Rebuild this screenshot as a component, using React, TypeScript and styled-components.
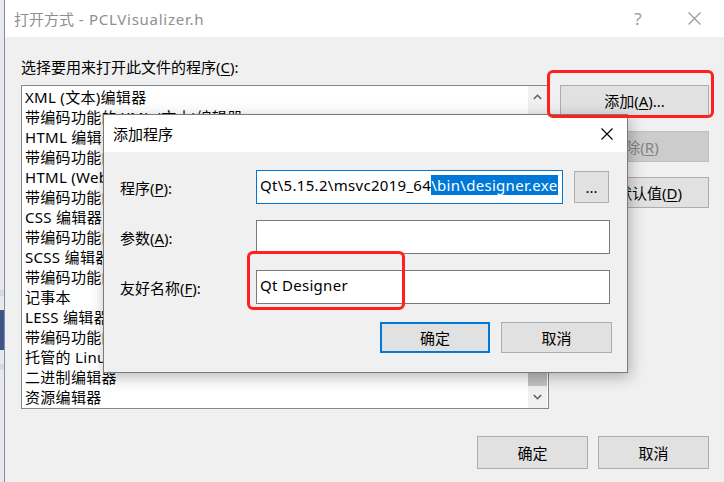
import React from "react";
import styled, { createGlobalStyle } from "styled-components";

const GlobalStyle = createGlobalStyle`
  html, body { margin: 0; padding: 0; }
  body {
    width: 724px;
    height: 482px;
    overflow: hidden;
    background: #f0f0f0;
    font-family: "Segoe UI", "Noto Sans", "Microsoft YaHei", "Noto Sans CJK SC", sans-serif;
    font-size: 15px;
    color: #000;
  }
  * { box-sizing: border-box; }
`;

const Screen = styled.div`
  position: relative;
  width: 724px;
  height: 482px;
  display: flex;
  overflow: hidden;
`;

const DesktopEdge = styled.div`
  width: 4px;
  background: #e9e9e9;
  display: flex;
  flex-direction: column;
  padding-top: 290px;
  gap: 14px;
`;

const DesktopBlock = styled.div<{ $h: number; $c: string }>`
  height: ${(p) => p.$h}px;
  background: ${(p) => p.$c};
`;

const MainWindow = styled.div`
  flex: 1;
  display: flex;
  flex-direction: column;
  border-left: 1px solid #7d8db0;
`;

const TitleBar = styled.div<{ $h: number; $pad: number }>`
  height: ${(p) => p.$h}px;
  background: #fff;
  display: flex;
  align-items: center;
  padding-left: ${(p) => p.$pad}px;
  flex-shrink: 0;
`;

const TitleText = styled.div<{ $muted?: boolean }>`
  flex: 1;
  font-size: 15px;
  color: ${(p) => (p.$muted ? "#8f8f8f" : "#000")};
  white-space: nowrap;
`;

const TitleLatin = styled.span`
  letter-spacing: 0.75px;
`;

const CaptionButton = styled.div<{ $w: number }>`
  width: ${(p) => p.$w}px;
  height: 100%;
  display: flex;
  align-items: center;
  justify-content: center;
  color: #9a9a9a;
  font-size: 17px;
`;

const Client = styled.div`
  flex: 1;
  background: #f0f0f0;
  padding: 20px 15px 0 16px;
  display: flex;
  flex-direction: column;
`;

const Prompt = styled.div`
  height: 20px;
  line-height: 20px;
  margin-bottom: 8px;
  white-space: nowrap;
`;

const Key = styled.span`
  text-decoration: underline;
  text-underline-offset: 2px;
`;

const ContentRow = styled.div`
  display: flex;
  gap: 11px;
  align-items: flex-start;
`;

const ListBox = styled.div`
  width: 528px;
  height: 324px;
  border: 1px solid #828790;
  background: #fff;
  display: flex;
`;

const ListItems = styled.div`
  flex: 1;
  padding: 1px 0 0 3px;
  overflow: hidden;
`;

const ListItem = styled.div`
  height: 20px;
  line-height: 20px;
  white-space: nowrap;
  letter-spacing: 0.3px;
`;

const ScrollBar = styled.div`
  width: 19px;
  margin-right: 1px;
  background: #f0f0f0;
  display: flex;
  flex-direction: column;
`;

const ScrollArrow = styled.div`
  height: 22px;
  display: flex;
  align-items: center;
  justify-content: center;
`;

const ScrollTrack = styled.div`
  flex: 1;
  display: flex;
  flex-direction: column;
  justify-content: flex-end;
`;

const ScrollThumb = styled.div`
  height: 190px;
  background: #c2c2c2;
`;

const ButtonColumn = styled.div`
  width: 149px;
  display: flex;
  flex-direction: column;
  gap: 15px;
`;

const WinButton = styled.div<{ $w?: number; $h?: number; $disabled?: boolean; $default?: boolean }>`
  width: ${(p) => (p.$w ? `${p.$w}px` : "100%")};
  height: ${(p) => p.$h ?? 31}px;
  background: ${(p) => (p.$disabled ? "#cccccc" : "#e1e1e1")};
  border: ${(p) => (p.$default ? "2px solid #0078d7" : p.$disabled ? "1px solid #bfbfbf" : "1px solid #adadad")};
  color: ${(p) => (p.$disabled ? "#838383" : "#000")};
  display: flex;
  align-items: center;
  justify-content: center;
  white-space: nowrap;
  flex-shrink: 0;
`;

const Footer = styled.div`
  display: flex;
  justify-content: flex-end;
  gap: 10px;
  margin-top: 27px;
`;

const Dialog = styled.div`
  position: absolute;
  left: 103px;
  top: 114px;
  width: 525px;
  height: 259px;
  border: 1px solid #7a7a7a;
  background: #f0f0f0;
  box-shadow: 2px 4px 14px rgba(0, 0, 0, 0.28);
  display: flex;
  flex-direction: column;
`;

const DialogBody = styled.div`
  padding: 18px 17px 0 15px;
  display: flex;
  flex-direction: column;
`;

const FormGrid = styled.div`
  display: grid;
  grid-template-columns: 137px 1fr;
  row-gap: 16px;
  align-items: center;
`;

const FieldLabel = styled.div`
  white-space: nowrap;
  padding-left: 1px;
`;

const FieldRow = styled.div`
  display: flex;
  align-items: center;
  gap: 11px;
`;

const TextField = styled.div<{ $w?: number; $focused?: boolean }>`
  width: ${(p) => (p.$w ? `${p.$w}px` : "100%")};
  height: 34px;
  background: #fff;
  border: 1px solid ${(p) => (p.$focused ? "#0078d7" : "#7a7a7a")};
  padding: 0 0 5px 3px;
  display: flex;
  align-items: center;
  white-space: nowrap;
  overflow: hidden;
  letter-spacing: 0.3px;
`;

const Selection = styled.span`
  background: #0078d7;
  color: #fff;
  line-height: 20px;
`;

const DialogButtons = styled.div`
  display: flex;
  justify-content: flex-end;
  gap: 11px;
  margin-top: 18px;
  margin-right: -2px;
`;

const Annotation = styled.div<{ $x: number; $y: number; $w: number; $h: number }>`
  position: absolute;
  left: ${(p) => p.$x}px;
  top: ${(p) => p.$y}px;
  width: ${(p) => p.$w}px;
  height: ${(p) => p.$h}px;
  border: 3px solid #ff1f1f;
  border-radius: 6px;
  pointer-events: none;
`;

const CloseIcon = ({ size, color }: { size: number; color: string }) => (
  <svg width={size} height={size} viewBox="0 0 12 12">
    <path d="M0.5 0.5 L11.5 11.5 M11.5 0.5 L0.5 11.5" stroke={color} strokeWidth="1.1" fill="none" />
  </svg>
);

const Chevron = ({ up }: { up?: boolean }) => (
  <svg width="9" height="6" viewBox="0 0 9 6">
    <path
      d={up ? "M0.8 5 L4.5 1.3 L8.2 5" : "M0.8 1 L4.5 4.7 L8.2 1"}
      stroke="#606060"
      strokeWidth="1.6"
      fill="none"
    />
  </svg>
);

const items = [
  "XML (文本)编辑器",
  "带编码功能的 XML (文本)编辑器",
  "HTML 编辑器",
  "带编码功能的 HTML 编辑器",
  "HTML (Web 窗体)编辑器",
  "带编码功能的 HTML (Web 窗体)编辑器",
  "CSS 编辑器",
  "带编码功能的 CSS 编辑器",
  "SCSS 编辑器",
  "带编码功能的 SCSS 编辑器",
  "记事本",
  "LESS 编辑器",
  "带编码功能的 LESS 编辑器",
  "托管的 Linux 编辑器",
  "二进制编辑器",
  "资源编辑器",
];

export default function App() {
  return (
    <>
      <GlobalStyle />
      <Screen>
        <DesktopEdge>
          <DesktopBlock $h={6} $c="#d6d9e0" />
          <DesktopBlock $h={40} $c="#3e5585" />
          <DesktopBlock $h={6} $c="#d6d9e0" />
        </DesktopEdge>
        <MainWindow>
          <TitleBar $h={37} $pad={9}>
            <TitleText $muted>
              打开方式<TitleLatin> - PCLVisualizer.h</TitleLatin>
            </TitleText>
            <CaptionButton $w={52}>?</CaptionButton>
            <CaptionButton $w={60}>
              <CloseIcon size={13} color="#9a9a9a" />
            </CaptionButton>
          </TitleBar>
          <Client>
            <Prompt>
              选择要用来打开此文件的程序(<Key>C</Key>):
            </Prompt>
            <ContentRow>
              <ListBox>
                <ListItems>
                  {items.map((t) => (
                    <ListItem key={t}>{t}</ListItem>
                  ))}
                </ListItems>
                <ScrollBar>
                  <ScrollArrow>
                    <Chevron up />
                  </ScrollArrow>
                  <ScrollTrack>
                    <ScrollThumb />
                  </ScrollTrack>
                  <ScrollArrow>
                    <Chevron />
                  </ScrollArrow>
                </ScrollBar>
              </ListBox>
              <ButtonColumn>
                <WinButton>
                  添加(<Key>A</Key>)...
                </WinButton>
                <WinButton $disabled>
                  移除(<Key>R</Key>)
                </WinButton>
                <WinButton>
                  设为默认值(<Key>D</Key>)
                </WinButton>
              </ButtonColumn>
            </ContentRow>
            <Footer>
              <WinButton $w={111} $h={33}>
                确定
              </WinButton>
              <WinButton $w={111} $h={33}>
                取消
              </WinButton>
            </Footer>
          </Client>
        </MainWindow>

        <Dialog>
          <TitleBar $h={37} $pad={9}>
            <TitleText>添加程序</TitleText>
            <CaptionButton $w={40}>
              <CloseIcon size={12} color="#000" />
            </CaptionButton>
          </TitleBar>
          <DialogBody>
            <FormGrid>
              <FieldLabel>
                程序(<Key>P</Key>):
              </FieldLabel>
              <FieldRow>
                <TextField $w={307} $focused>
                  Qt\5.15.2\msvc2019_64<Selection>\bin\designer.exe</Selection>
                </TextField>
                <WinButton $w={35} $h={32}>
                  ...
                </WinButton>
              </FieldRow>
              <FieldLabel>
                参数(<Key>A</Key>):
              </FieldLabel>
              <TextField />
              <FieldLabel>
                友好名称(<Key>F</Key>):
              </FieldLabel>
              <TextField>Qt Designer</TextField>
            </FormGrid>
            <DialogButtons>
              <WinButton $w={110} $default>
                确定
              </WinButton>
              <WinButton $w={111}>取消</WinButton>
            </DialogButtons>
          </DialogBody>
        </Dialog>

        <Annotation $x={547} $y={70} $w={167} $h={48} />
        <Annotation $x={247} $y={251} $w={158} $h={59} />
      </Screen>
    </>
  );
}
